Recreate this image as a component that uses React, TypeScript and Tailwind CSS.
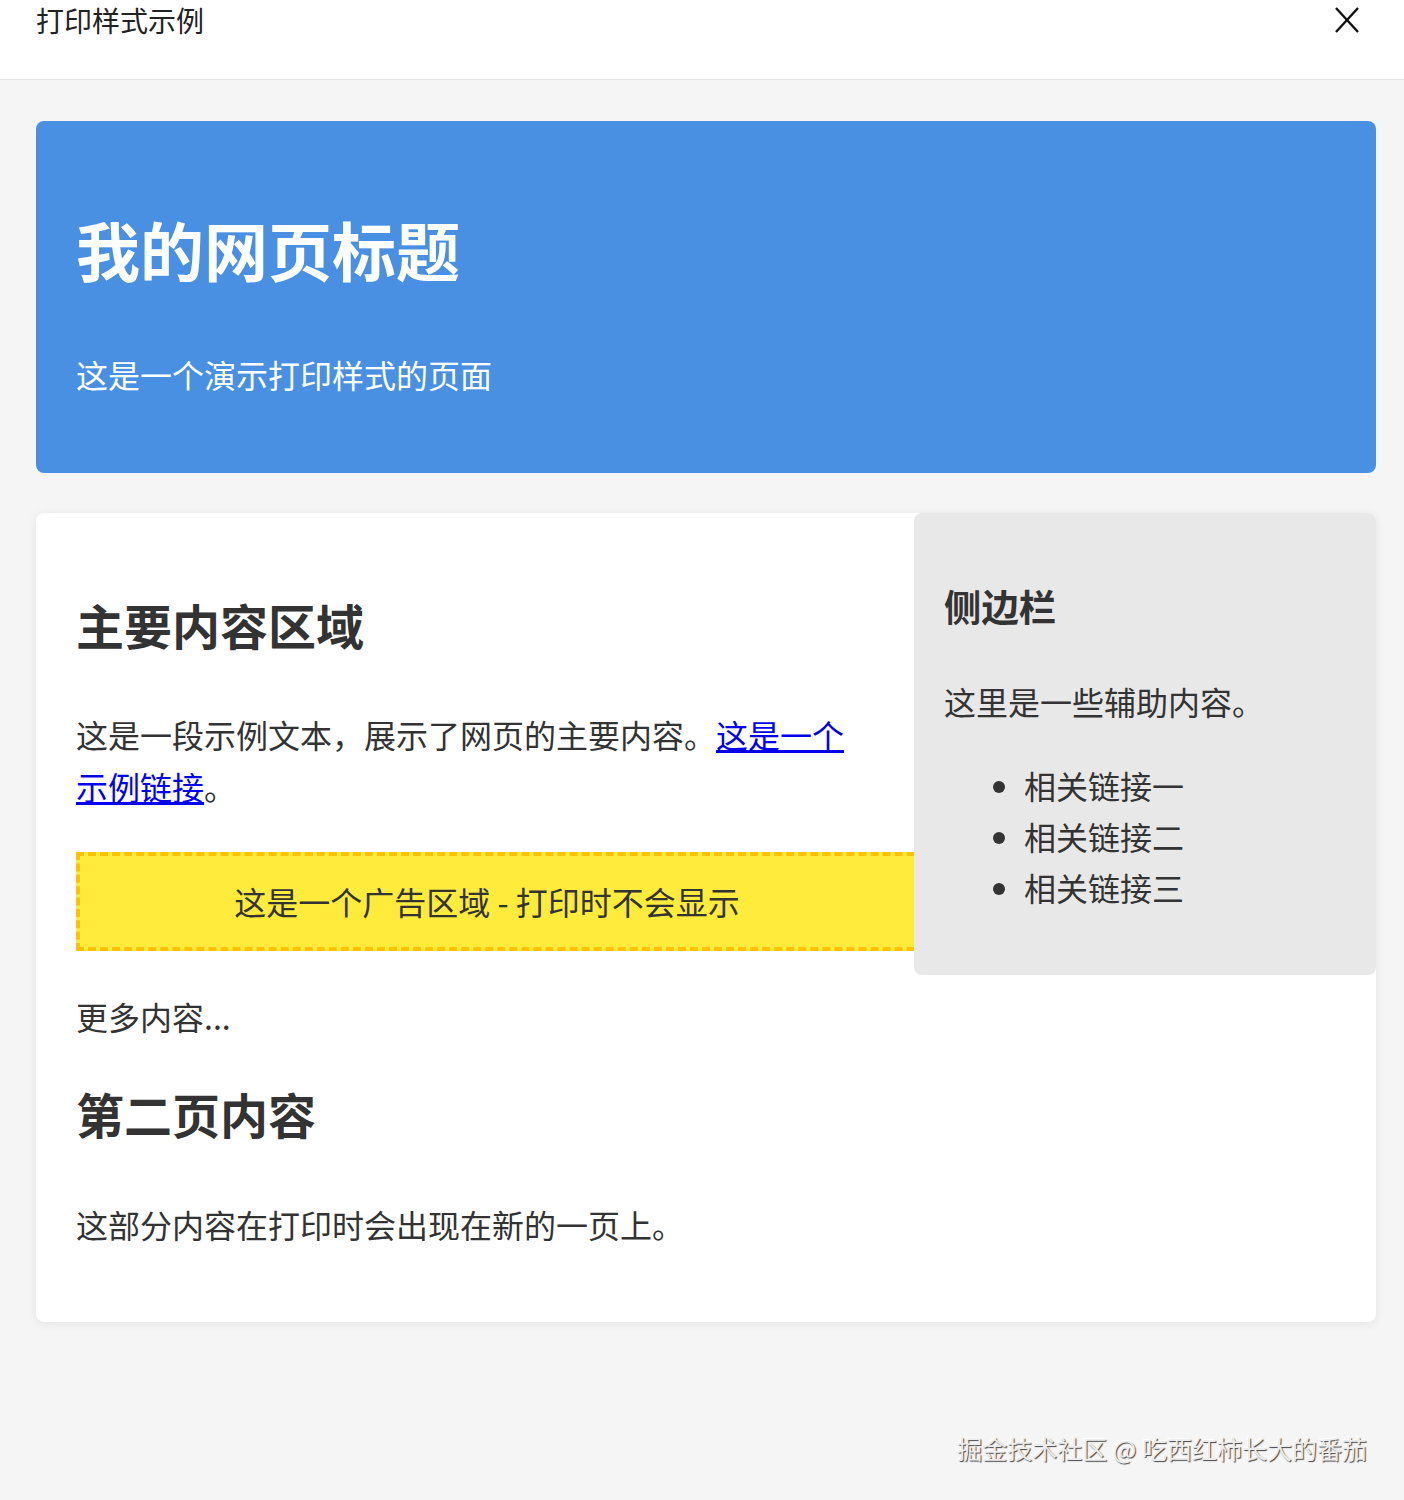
const font = "font-['Noto_Sans_CJK_SC','Noto_Sans',sans-serif]";

export default function App() {
  return (
    <div className={`min-h-screen bg-[#f5f5f5] text-[#333] ${font}`}>
      {/* Top bar */}
      <div className="h-[80px] bg-white border-b border-[#e3e3e3] flex items-start justify-between pl-[36px] pr-[45px]">
        <div className="text-[28px] leading-[40px] text-[#222]">打印样式示例</div>
        <svg width="24" height="26" viewBox="0 0 24 26" className="mt-[7px]" fill="none" stroke="#111" strokeWidth="2.4" strokeLinecap="butt">
          <line x1="1" y1="1" x2="23" y2="25" />
          <line x1="23" y1="1" x2="1" y2="25" />
        </svg>
      </div>

      <div className="pl-[36px] pr-[28px] pt-[41px]">
        {/* Header */}
        <header className="bg-[#4a90e2] text-white p-10 rounded-lg mb-10">
          <h1 className="text-[64px] font-bold leading-[1.6] mt-[36px] mb-[50px]">我的网页标题</h1>
          <p className="text-[32px] leading-[1.6] mb-8">这是一个演示打印样式的页面</p>
        </header>

        {/* Content */}
        <div>
          <aside className="float-right w-[462px] ml-10 p-[30px] bg-[#e8e8e8] rounded-lg">
            <h3 className="text-[37.4px] font-bold leading-[1.6] mt-[34px] mb-[40px]">侧边栏</h3>
            <p className="text-[32px] leading-[1.6] mb-8">这里是一些辅助内容。</p>
            <ul className="list-disc pl-20 text-[32px] leading-[1.6] mb-8">
              <li>相关链接一</li>
              <li>相关链接二</li>
              <li>相关链接三</li>
            </ul>
          </aside>

          <main className="bg-white p-10 rounded-lg shadow-[0_2px_10px_rgba(0,0,0,0.08)]">
            <h2 className="text-[48px] font-bold leading-[1.6] mt-[33px] mb-[47px]">主要内容区域</h2>
            <p className="text-[32px] leading-[1.6] my-8">
              这是一段示例文本，展示了网页的主要内容。
              <a href="#" className="text-[#0000ee] underline">这是一个示例链接</a>。
            </p>
            <div className="bg-[#ffeb3b] border-4 border-dashed border-[#ffc107] p-5 text-center text-[32px] leading-[1.6] my-10">
              这是一个广告区域 - 打印时不会显示
            </div>
            <p className="text-[32px] leading-[1.6] my-8">更多内容...</p>
            <h2 className="text-[48px] font-bold leading-[1.6] mt-[33px] mb-[47px]">第二页内容</h2>
            <p className="text-[32px] leading-[1.6] my-8">这部分内容在打印时会出现在新的一页上。</p>
          </main>
        </div>

        {/* Watermark */}
        <div className="flex justify-end pt-[108px] pr-[9px]">
          <span className="text-[25px] leading-[36px] text-[#ececec] [text-shadow:1px_1px_1px_#444,-1px_-1px_0_#fff]">
            掘金技术社区 @ 吃西红柿长大的番茄
          </span>
        </div>
      </div>
    </div>
  );
}
